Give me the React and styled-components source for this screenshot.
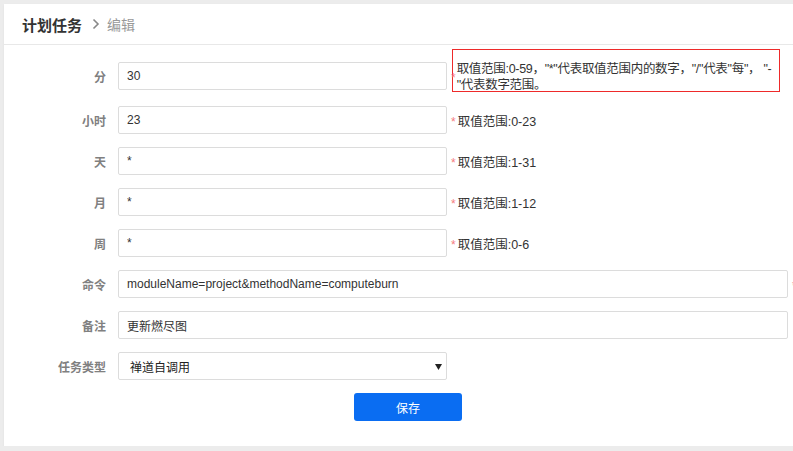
import styled, { createGlobalStyle } from "styled-components";

const GlobalStyle = createGlobalStyle`
  html, body {
    margin: 0;
    padding: 0;
    background: #ececec;
    overflow: hidden;
    font-family: "Liberation Sans", "Noto Sans CJK SC", sans-serif;
  }
`;

const rows = [
  {
    label: "分",
    value: "30",
    note: ["取值范围:0-59，\"*\"代表取值范围内的数字，\"/\"代表\"每\"， \"-", "\"代表数字范围。"],
    boxed: true,
  },
  { label: "小时", value: "23", note: "取值范围:0-23" },
  { label: "天", value: "*", note: "取值范围:1-31" },
  { label: "月", value: "*", note: "取值范围:1-12" },
  { label: "周", value: "*", note: "取值范围:0-6" },
];

const App = () => {
  return (
    <>
      <GlobalStyle />
      <Page>
        <Panel>
          <Header>
            <Title>计划任务</Title>
            <Chevron viewBox="0 0 8 12">
              <path d="M1.5 1.5 L6 6 L1.5 10.5" fill="none" stroke="#888" strokeWidth="1.6" />
            </Chevron>
            <Crumb>编辑</Crumb>
          </Header>
          <Form>
            {rows.map((row) => (
              <Row key={row.label} $first={row.boxed}>
                <Label>{row.label}</Label>
                <Input $wide={false} defaultValue={row.value} />
                <Hint>
                  <Star>*</Star>
                  {row.boxed ? (
                    <NoteBox>
                      {row.note.map((line) => (
                        <NoteLine key={line}>{line}</NoteLine>
                      ))}
                    </NoteBox>
                  ) : (
                    <span>{row.note}</span>
                  )}
                </Hint>
              </Row>
            ))}
            <Row>
              <Label>命令</Label>
              <Input $wide defaultValue="moduleName=project&methodName=computeburn" />
              <Hint>
                <Star>*</Star>
              </Hint>
            </Row>
            <Row>
              <Label>备注</Label>
              <Input $wide defaultValue="更新燃尽图" />
            </Row>
            <Row>
              <Label>任务类型</Label>
              <SelectBox>
                <span>禅道自调用</span>
                <Arrow viewBox="0 0 8 8">
                  <path d="M0 1 H8 L4 8 Z" fill="#222" />
                </Arrow>
              </SelectBox>
            </Row>
            <Actions>
              <SaveButton>保存</SaveButton>
            </Actions>
          </Form>
        </Panel>
      </Page>
    </>
  );
};

export default App;

const Page = styled.div`
  padding: 4px 0 0 4px;
  width: 900px;
`;

const Panel = styled.div`
  background: #fff;
  width: 860px;
  height: 442px;
  box-shadow: 0 1px 2px rgba(0, 0, 0, 0.06);
`;

const Header = styled.div`
  height: 40px;
  display: flex;
  align-items: center;
  padding-left: 18px;
  border-bottom: 1px solid #e8e8e8;
`;

const Title = styled.span`
  font-size: 15px;
  font-weight: 700;
  color: #333;
`;

const Chevron = styled.svg`
  width: 8px;
  height: 12px;
  margin: 0 7px 0 10px;
`;

const Crumb = styled.span`
  font-size: 14px;
  color: #999;
`;

const Form = styled.div`
  padding-top: 17px;
  display: flex;
  flex-direction: column;
  gap: 13px;
`;

const Row = styled.div`
  display: flex;
  align-items: center;
  height: 28px;
  margin-bottom: ${(p) => (p.$first ? "3px" : "0")};
`;

const Label = styled.div`
  width: 102px;
  margin-right: 12px;
  text-align: right;
  font-size: 12px;
  font-weight: 700;
  color: #808080;
`;

const Input = styled.input`
  box-sizing: border-box;
  width: ${(p) => (p.$wide ? "670px" : "329px")};
  height: 28px;
  border: 1px solid #dcdcdc;
  border-radius: 2px;
  padding: 0 8px;
  font-family: inherit;
  font-size: 12px;
  color: #333;
  outline: none;
`;

const Hint = styled.div`
  display: flex;
  align-items: center;
  margin-left: 4px;
  font-size: 12.5px;
  color: #333;
  white-space: nowrap;
`;

const Star = styled.span`
  color: #f57a80;
  font-size: 12px;
  margin-right: 2px;
  position: relative;
  top: 2px;
`;

const NoteBox = styled.div`
  box-sizing: border-box;
  width: 328px;
  height: 43px;
  margin-bottom: 11px;
  margin-left: -6px;
  padding: 11px 4px 0 4px;
  border: 1px solid #ee2a2a;
  font-size: 12.5px;
  color: #333;
`;

const NoteLine = styled.div`
  line-height: 16px;
  white-space: nowrap;
  letter-spacing: -0.3px;
`;

const SelectBox = styled.div`
  position: relative;
  box-sizing: border-box;
  width: 329px;
  height: 28px;
  border: 1px solid #dcdcdc;
  border-radius: 2px;
  padding: 0 11px;
  display: flex;
  align-items: center;
  font-size: 12px;
  color: #222;
`;

const Arrow = styled.svg`
  position: absolute;
  right: 4px;
  top: 10px;
  width: 7px;
  height: 7px;
`;

const Actions = styled.div`
  padding-left: 350px;
`;

const SaveButton = styled.button`
  width: 108px;
  height: 28px;
  border: none;
  border-radius: 3px;
  background: #0a6df2;
  color: #fff;
  font-family: inherit;
  font-size: 12px;
  cursor: pointer;
`;
